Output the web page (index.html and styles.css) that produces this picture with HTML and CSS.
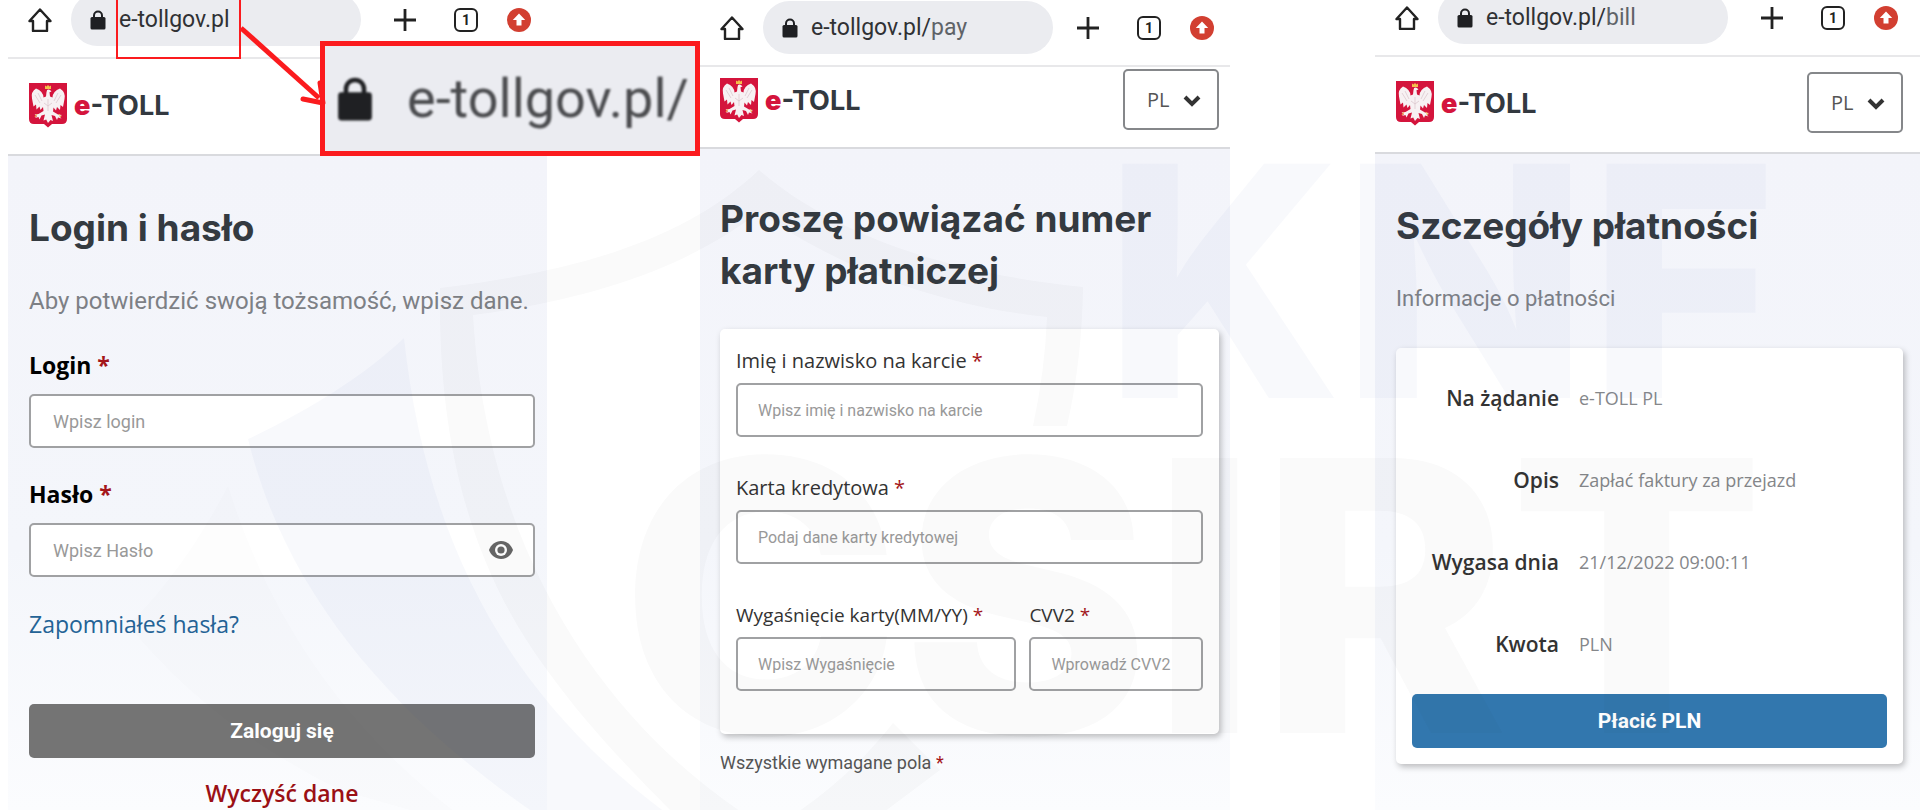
FILE: index.html
```
<!DOCTYPE html>
<html lang="pl">
<head>
<meta charset="UTF-8">
<meta name="viewport" content="width=device-width, initial-scale=1.0">
<title>CSIRT KNF</title>
<link rel="stylesheet" href="styles.css">
</head>
<body>
  <!-- shared icons -->
  <svg class="sprite" aria-hidden="true">
    <symbol id="home" viewBox="0 0 24 24"><path d="M12 1.500 1.500 13H5v10h14V13h3.500z" fill="none" stroke="#222" stroke-width="2.400" stroke-linejoin="round"/></symbol>
    <symbol id="lock" viewBox="0 0 16 20"><path d="M4 8V5.500a4 4 0 0 1 8 0V8" fill="none" stroke="#1f2023" stroke-width="2"/><rect x="0.500" y="7" width="15" height="12.500" rx="1.500" fill="#1f2023"/></symbol>
    <symbol id="plus" viewBox="0 0 22 22"><path d="M11 0v22M0 11h22" stroke="#222" stroke-width="2.800"/></symbol>
    <symbol id="update" viewBox="0 0 24 24"><circle cx="12" cy="12" r="12" fill="#d23f31"/><path d="M12 5.500 5.800 12H9.500v5.500h5V12h3.700z" fill="#fff"/></symbol>
    <symbol id="eagle" viewBox="0 0 38 45">
      <path d="M0 0h38v36q0 5-5 5H23l-4 3.500L15 41H5q-5 0-5-5z" fill="#d4143c"/>
      <path d="M17.500 9Q18 5.500 21 7l1.500 1.500-2 .8.5 4.200 2.500 1Q24 8 31 5.500q6 4 4.500 10.500l-1.500 8-2.500-2-.5 5-3-3-1 3.500-2.500-3-.5 4 5 3 4 .5-2.500 1.500 2 2-3.500-1-1 2.500-2-4-3.500-1 1.500 6-2.500-1L19 40l-1.800-3.500-2.700 1 1.500-6-3.500 1-2 4-1-2.500-3.500 1 2-2L5.500 31.500l4-.5 5-3-.5-4-2.500 3-1-3.500-3 3L7 21.500l-2.500 2L3 15.500Q1.500 9 7 5.500 14 8 14.500 14.500l2.500-1z" fill="#f7f1f3"/>
      <path d="M6 12l5 8M32 12l-5 8M9 10l4 8M29 10l-4 8M19 16v12M15 20l4 3 4-3" stroke="#d8c3ca" stroke-width="0.700" fill="none"/>
      <path d="M16 6V2.500l1.500 1L19 2l1.500 1.500 1.500-1V6z" fill="#f3c04a"/>
      <path d="M8 31l-2 3M30 31l2 3" stroke="#f3c04a" stroke-width="1"/>
    </symbol>
    <symbol id="eye" viewBox="0 0 24 18"><path d="M12 0C6.500 0 2 3.500 0 9c2 5.500 6.500 9 12 9s10-3.500 12-9c-2-5.500-6.500-9-12-9z" fill="#666"/><circle cx="12" cy="9" r="6" fill="#fff"/><circle cx="12" cy="9" r="3.600" fill="#666"/></symbol>
    <symbol id="chevron" viewBox="0 0 18 12"><path d="M2 2l7 7 7-7" fill="none" stroke="#333" stroke-width="4"/></symbol>
  </svg>

  <main class="board">
    <section class="phone phone-login">
      <div class="bar">
        <svg class="ico"><use href="#home"/></svg>
        <div class="url"><svg class="lock"><use href="#lock"/></svg><span>e-tollgov.pl</span></div>
        <svg class="ico plus"><use href="#plus"/></svg>
        <span class="tabs">1</span>
        <svg class="ico"><use href="#update"/></svg>
      </div>
      <header class="head">
        <div class="logo"><svg class="eagle"><use href="#eagle"/></svg><span><b>e</b>-TOLL</span></div>
      </header>
      <form class="content">
        <h1>Login i hasło</h1>
        <p class="lead">Aby potwierdzić swoją tożsamość, wpisz dane.</p>
        <label class="strong" for="login">Login <i>*</i></label>
        <input id="login" type="text" placeholder="Wpisz login">
        <label class="strong" for="pass">Hasło <i>*</i></label>
        <div class="pass">
          <input id="pass" type="password" placeholder="Wpisz Hasło">
          <svg class="eye"><use href="#eye"/></svg>
        </div>
        <a class="forgot" href="#">Zapomniałeś hasła?</a>
        <button class="btn btn-grey" type="button">Zaloguj się</button>
        <button class="clear" type="reset">Wyczyść dane</button>
      </form>

      <!-- enlarged address with the arrow -->
      <div class="mark"></div>
      <div class="magnify"><svg class="lock"><use href="#lock"/></svg><span>e-tollgov.pl/</span></div>
      <svg class="arrow" viewBox="0 0 90 84"><path d="M2 4 80 74" stroke="#fb1b1e" stroke-width="5"/><path d="M64 75l20 4-3-20" fill="none" stroke="#fb1b1e" stroke-width="5" stroke-linecap="round" stroke-linejoin="round"/></svg>
    </section>

    <section class="phone phone-pay">
      <div class="bar">
        <svg class="ico"><use href="#home"/></svg>
        <div class="url"><svg class="lock"><use href="#lock"/></svg><span>e-tollgov.pl/<em>pay</em></span></div>
        <svg class="ico plus"><use href="#plus"/></svg>
        <span class="tabs">1</span>
        <svg class="ico"><use href="#update"/></svg>
      </div>
      <header class="head">
        <div class="logo"><svg class="eagle"><use href="#eagle"/></svg><span><b>e</b>-TOLL</span></div>
        <div class="lang"><select aria-label="Język"><option>PL</option></select><svg><use href="#chevron"/></svg></div>
      </header>
      <form class="content">
        <h1>Proszę powiązać numer karty płatniczej</h1>
        <div class="card">
          <label for="name">Imię i nazwisko na karcie <i>*</i></label>
          <input id="name" type="text" placeholder="Wpisz imię i nazwisko na karcie">
          <label for="number">Karta kredytowa <i>*</i></label>
          <input id="number" type="text" placeholder="Podaj dane karty kredytowej">
          <div class="pair">
            <div>
              <label class="small" for="date">Wygaśnięcie karty(MM/YY) <i>*</i></label>
              <input id="date" type="text" placeholder="Wpisz Wygaśnięcie">
            </div>
            <div>
              <label class="small" for="cvv">CVV2 <i>*</i></label>
              <input id="cvv" type="text" placeholder="Wprowadź CVV2">
            </div>
          </div>
        </div>
        <p class="note">Wszystkie wymagane pola <i>*</i></p>
      </form>
    </section>

    <section class="phone phone-bill">
      <div class="bar">
        <svg class="ico"><use href="#home"/></svg>
        <div class="url"><svg class="lock"><use href="#lock"/></svg><span>e-tollgov.pl/<em>bill</em></span></div>
        <svg class="ico plus"><use href="#plus"/></svg>
        <span class="tabs">1</span>
        <svg class="ico"><use href="#update"/></svg>
      </div>
      <header class="head">
        <div class="logo"><svg class="eagle"><use href="#eagle"/></svg><span><b>e</b>-TOLL</span></div>
        <div class="lang"><select aria-label="Język"><option>PL</option></select><svg><use href="#chevron"/></svg></div>
      </header>
      <div class="content">
        <h1>Szczegóły płatności</h1>
        <p class="lead">Informacje o płatności</p>
        <div class="card">
          <dl>
            <dt>Na żądanie</dt><dd>e-TOLL PL</dd>
            <dt>Opis</dt><dd>Zapłać faktury za przejazd</dd>
            <dt>Wygasa dnia</dt><dd>21/12/2022 09:00:11</dd>
            <dt>Kwota</dt><dd>PLN</dd>
          </dl>
          <button class="btn btn-blue" type="button">Płacić PLN</button>
        </div>
      </div>
    </section>
  </main>

  <svg class="watermark" viewBox="0 0 1920 810" preserveAspectRatio="xMinYMin slice" aria-hidden="true">
    <g class="wm-grey">
      <path d="M759 170C690 235 590 270 440 288C438 430 465 560 547 670C590 730 640 780 690 830H860L940 770L893 723C860 765 820 800 770 830C650 760 490 600 473 315C600 298 690 265 759 212C830 262 930 305 1047 317Q1045 370 1033 426H1067Q1082 360 1083 287C960 275 840 240 759 170z"/>
      <text x="620" y="733" font-size="378">CSIRT</text>
    </g>
    <path class="wm-pale" d="M228 486C200 540 165 590 128 625C190 700 260 750 340 790L480 830C350 740 270 620 228 486z"/>
    <g class="wm-blue">
      <path d="M404 338C365 375 310 410 248 439C285 590 390 720 560 830H690C500 700 425 530 404 338z"/>
      <text x="1104" y="398" font-size="322">KNF</text>
    </g>
  </svg>
</body>
</html>
```
FILE: styles.css
```
* {
  box-sizing: border-box;
}

body {
  margin: 0;
  position: relative;
  min-height: 100vh;
  overflow: hidden;
  background-color: #fff;
  font-family: "Open Sans", "Noto Sans", sans-serif;
  color: #333;
}

.sprite {
  display: none;
}

.board {
  display: grid;
  grid-template-columns: 539fr 153fr 530fr 145fr 545fr;
  padding-left: 8px;
  height: 100vh;
}

/* one phone screen */
.phone {
  position: relative;
  display: flex;
  flex-direction: column;
}

.phone-login {
  grid-column: 1;
  margin-top: -8px;
}

.phone-pay {
  grid-column: 3;
}

.phone-bill {
  grid-column: 5;
  margin-top: -10px;
}

/* browser bar */
.bar {
  display: flex;
  align-items: center;
  height: 67px;
  padding: 2px 16px 12px 20px;
  border-bottom: 2px solid #e8e8ea;
}

.phone-bill .bar {
  padding-right: 22px;
}

.ico {
  width: 24px;
  height: 24px;
  flex: none;
}

.plus {
  width: 22px;
  height: 22px;
  margin-left: auto;
}

.url {
  display: flex;
  align-items: center;
  width: 290px;
  height: 53px;
  margin-left: 19px;
  padding-left: 19px;
  border-radius: 27px;
  background-color: #ebecf0;
  font: 23px Roboto, sans-serif;
  color: #303134;
}

.url em {
  font-style: normal;
  color: #5f6368;
}

.lock {
  width: 16px;
  height: 20px;
  margin-right: 13px;
}

.tabs {
  width: 24px;
  height: 24px;
  margin: 0 29px 0 38px;
  border: 2px solid #222;
  border-radius: 6px;
  font: bold 14px/20px Roboto, sans-serif;
  text-align: center;
  color: #222;
}

/* page header */
.head {
  display: flex;
  justify-content: space-between;
  align-items: flex-start;
  height: 97px;
  padding: 15px 17px 0 21px;
  border-bottom: 2px solid #d9dade;
}

.phone-pay .head {
  height: 82px;
  padding: 2px 11px 0 20px;
}

.logo {
  display: flex;
  align-items: center;
  gap: 7px;
  margin-top: 9px;
  font: bold 27px Inter, sans-serif;
  color: #333940;
}

.logo b {
  color: #d4143c;
}

.eagle {
  width: 38px;
  height: 45px;
}

.lang {
  position: relative;
  width: 96px;
  height: 61px;
}

.lang select {
  appearance: none;
  width: 100%;
  height: 100%;
  padding: 0 22px;
  border: 2px solid #85878a;
  border-radius: 5px;
  background-color: #fff;
  font: 20px "Open Sans", sans-serif;
  color: #555;
}

.lang svg {
  position: absolute;
  right: 18px;
  top: 26px;
  width: 18px;
  height: 12px;
  pointer-events: none;
}

/* page body */
.content {
  flex: 1;
  padding: 46px 12px 0 21px;
  background: linear-gradient(#f3f4fa, #f4f6fb 60%, #fbfcfe);
}

.phone-pay .content {
  padding: 44px 11px 0 20px;
}

.phone-bill .content {
  padding-right: 17px;
}

h1 {
  margin: 0;
  font: bold 37px/52px Inter, sans-serif;
  color: #343a40;
}

.lead {
  margin: 32px 0 34px;
  font: 24px/30px Roboto, sans-serif;
  color: #7d8085;
}

.phone-bill .lead {
  font-size: 22px;
}

label {
  display: block;
  margin-bottom: 8px;
  font-size: 20px;
  line-height: 28px;
}

label.strong {
  margin-bottom: 14px;
  font-weight: bold;
  font-size: 23px;
  line-height: 30px;
  color: #000;
}

label.small {
  font-size: 19px;
}

i {
  font-style: normal;
  color: #a4161a;
}

input {
  display: block;
  width: 100%;
  height: 54px;
  padding: 0 22px;
  border: 2px solid #a0a1a3;
  border-radius: 5px;
  background-color: #fff;
  font: 18px Roboto, sans-serif;
}

input::placeholder {
  color: #999;
}

#login {
  margin-bottom: 31px;
}

.pass {
  position: relative;
}

.eye {
  position: absolute;
  right: 22px;
  top: 18px;
  width: 24px;
  height: 18px;
}

.forgot {
  display: block;
  margin: 31px 0 64px;
  font-size: 23px;
  line-height: 32px;
  color: #246396;
  text-decoration: none;
}

.btn {
  display: block;
  width: 100%;
  height: 54px;
  border: none;
  border-radius: 5px;
  font: bold 21px Roboto, sans-serif;
  color: #fff;
}

.btn-grey {
  background-color: #747474;
}

.btn-blue {
  background-color: #3277ae;
}

.clear {
  display: block;
  margin: 19px auto 0;
  padding: 0;
  border: none;
  background: none;
  font: 600 23px/32px "Open Sans", sans-serif;
  color: #9b1015;
}

.card {
  border-radius: 5px;
  background-color: #fff;
  box-shadow: 2px 3px 6px rgba(0, 0, 0, 0.25);
}

.phone-pay .card {
  margin-top: 32px;
  padding: 18px 16px 43px;
}

.phone-pay .card input {
  font-size: 16px;
  padding: 0 20px;
}

.phone-pay .card > input {
  margin-bottom: 37px;
}

.pair {
  display: grid;
  grid-template-columns: 281fr 174fr;
  gap: 13px;
}

.note {
  margin: 16px 0 0;
  font: 18px/26px Roboto, sans-serif;
  color: #555;
}

.phone-bill .card {
  padding: 9px 16px 16px;
}

dl {
  display: grid;
  grid-template-columns: 147px 1fr;
  grid-auto-rows: 82px;
  column-gap: 20px;
  align-items: center;
  margin: 0 0 9px;
}

dt {
  text-align: right;
  white-space: nowrap;
  font-weight: 600;
  font-size: 21px;
}

dd {
  margin: 0;
  font-size: 18px;
  color: #85878a;
}

/* red marks over the first screen */
.mark {
  position: absolute;
  left: 108px;
  top: 6px;
  width: 125px;
  height: 61px;
  border: 2px solid #fb1b1e;
}

.magnify {
  position: absolute;
  left: 312px;
  top: 49px;
  display: flex;
  align-items: center;
  width: 380px;
  height: 115px;
  padding-left: 12px;
  overflow: hidden;
  border: 5px solid #fb1b1e;
  background-color: #ebecf1;
  font: 54px Roboto, sans-serif;
  color: #4a4b4e;
  z-index: 2;
}

.magnify span,
.magnify svg {
  filter: blur(1px);
}

.magnify .lock {
  flex: none;
  width: 36px;
  height: 46px;
  margin-right: 34px;
}

.arrow {
  position: absolute;
  left: 231px;
  top: 32px;
  width: 90px;
  height: 84px;
  z-index: 3;
}

.watermark {
  position: absolute;
  left: 0;
  top: 0;
  width: 100%;
  height: 100%;
  pointer-events: none;
  font-family: Inter, sans-serif;
  font-weight: 800;
}

.wm-grey {
  fill: rgba(60, 60, 60, 0.024);
}

.wm-pale {
  fill: rgba(60, 60, 60, 0.012);
}

.wm-blue {
  fill: rgba(50, 90, 180, 0.035);
}
```
